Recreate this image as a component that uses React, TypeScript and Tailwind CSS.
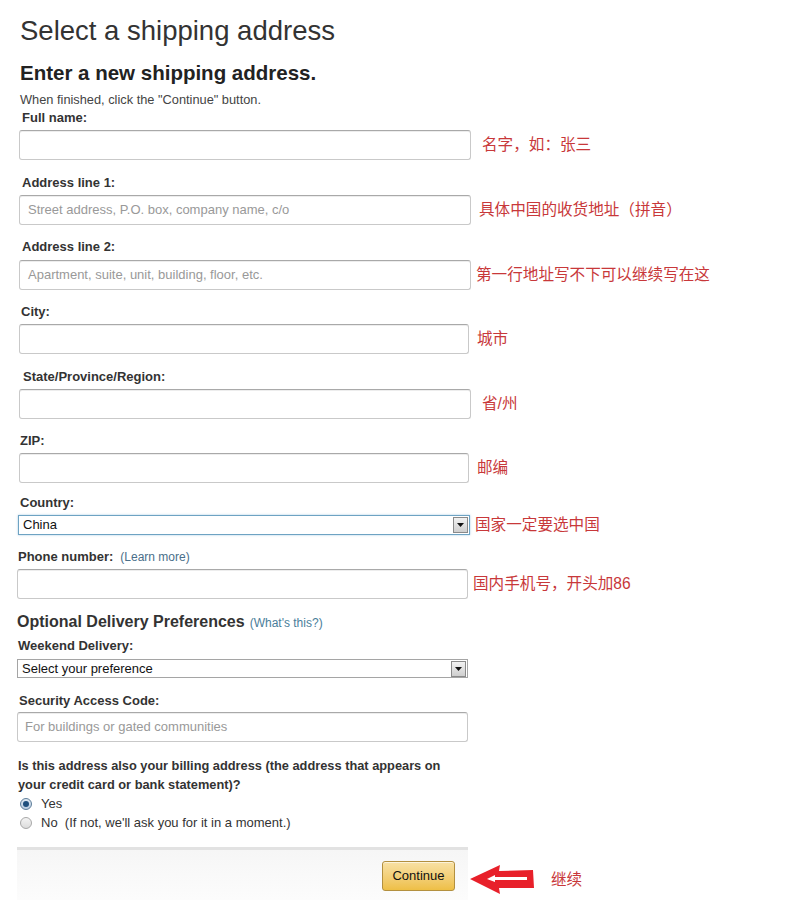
import * as React from "react"

const font = { fontFamily: '"Liberation Sans", Arial, "Noto Sans CJK SC", sans-serif' }

function Note({ text, className = "" }: { text: string; className?: string }) {
  return (
    <span
      className={`text-[15.6px] leading-none text-[#c8383a] whitespace-nowrap ${className}`}
      style={{ fontFamily: '"Liberation Sans", "Noto Sans CJK SC", sans-serif' }}
    >
      {text}
    </span>
  )
}

function TextField({
  label,
  placeholder,
  note,
  labelClass = "",
  boxClass = "ml-[19px] w-[452px]",
  noteClass = "ml-[11px]",
  gapClass = "mt-[4px]",
  children,
}: {
  label: string
  placeholder?: string
  note?: string
  labelClass?: string
  boxClass?: string
  noteClass?: string
  gapClass?: string
  children?: React.ReactNode
}) {
  return (
    <div>
      <div className={`h-[16px] text-[13px] leading-[16px] font-bold text-[#333] ${labelClass}`}>
        {label}
        {children}
      </div>
      <div className={`flex items-center ${gapClass}`}>
        <div
          className={`h-[30px] shrink-0 rounded-[3px] border border-[#c9c9c9] border-t-[#a9a9a9] bg-white shadow-[inset_0_1px_0_rgba(0,0,0,0.07)] flex items-center px-[8px] text-[13px] text-[#999] ${boxClass}`}
        >
          {placeholder}
        </div>
        {note && <Note text={note} className={noteClass} />}
      </div>
    </div>
  )
}

function DropArrow() {
  return (
    <div className="w-[15px] h-[16px] border border-[#8a8a8a] bg-gradient-to-b from-[#f2f2f2] to-[#cfcfcf] flex items-center justify-center mr-[1px]">
      <svg width="7" height="4" viewBox="0 0 7 4">
        <polygon points="0,0 7,0 3.5,4" fill="#111" />
      </svg>
    </div>
  )
}

function Radio({ checked }: { checked?: boolean }) {
  return (
    <span
      className={`inline-flex w-[12px] h-[12px] rounded-full border items-center justify-center ${
        checked ? "border-[#5d7d9a] bg-gradient-to-b from-[#dfe9f2] to-[#b9cbe0]" : "border-[#a8a8a8] bg-gradient-to-b from-[#f4f4f4] to-[#dcdcdc]"
      }`}
    >
      {checked && <span className="w-[6px] h-[6px] rounded-full bg-[#1f4f7d]" />}
    </span>
  )
}

export default function App() {
  return (
    <div className="w-[796px] h-[900px] bg-white overflow-hidden text-[#333]" style={font}>
      {/* Header */}
      <div className="pl-[20px] pt-[15px]">
        <h1 className="text-[27.5px] leading-[32px] font-normal text-[#333]">Select a shipping address</h1>
        <h2 className="mt-[14px] text-[20.5px] leading-[24px] font-bold text-[#222]">Enter a new shipping address.</h2>
        <p className="mt-[8px] text-[12.8px] leading-[14px] text-[#444]">When finished, click the "Continue" button.</p>
      </div>

      {/* Fields */}
      <div className="mt-[3px]">
        <TextField label="Full name:" labelClass="ml-[22px]" note="名字，如：张三" />
        <div className="mt-[15px]">
          <TextField
            label="Address line 1:"
            labelClass="ml-[22px]"
            placeholder="Street address, P.O. box, company name, c/o"
            note="具体中国的收货地址（拼音）"
            noteClass="ml-[8px]"
          />
        </div>
        <div className="mt-[14px]">
          <TextField
            label="Address line 2:"
            labelClass="ml-[22px]"
            placeholder="Apartment, suite, unit, building, floor, etc."
            note="第一行地址写不下可以继续写在这"
            noteClass="ml-[5px]"
            gapClass="mt-[5px]"
          />
        </div>
        <div className="mt-[14px]">
          <TextField
            label="City:"
            labelClass="ml-[21px]"
            boxClass="ml-[19px] w-[450px]"
            note="城市"
            noteClass="ml-[8px]"
          />
        </div>
        <div className="mt-[15px]">
          <TextField label="State/Province/Region:" labelClass="ml-[23px]" note="省/州" />
        </div>
        <div className="mt-[14px]">
          <TextField
            label="ZIP:"
            labelClass="ml-[20px]"
            boxClass="ml-[19px] w-[450px]"
            note="邮编"
            noteClass="ml-[8px]"
          />
        </div>

        {/* Country */}
        <div className="mt-[12px]">
          <div className="ml-[20px] h-[16px] text-[13px] leading-[16px] font-bold text-[#333]">Country:</div>
          <div className="mt-[4px] flex items-center">
            <div className="ml-[18px] w-[452px] h-[20px] border border-[#6ea3c3] bg-white shadow-[0_0_2px_rgba(80,150,200,0.5)] flex items-center justify-between">
              <span className="pl-[4px] text-[13px] text-[#111]">China</span>
              <DropArrow />
            </div>
            <Note text="国家一定要选中国" className="ml-[5px]" />
          </div>
        </div>

        {/* Phone */}
        <div className="mt-[14px]">
          <TextField
            label="Phone number:"
            labelClass="ml-[18px]"
            boxClass="ml-[17px] w-[451px]"
            note="国内手机号，开头加86"
            noteClass="ml-[5px]"
          >
            <span className="font-normal text-[12px] text-[#4a6f8a] ml-[7px]">(Learn more)</span>
          </TextField>
        </div>

        {/* Optional */}
        <div className="mt-[13px] ml-[17px]">
          <div className="h-[20px] leading-[20px]">
            <span className="text-[16px] font-bold text-[#333]">Optional Delivery Preferences</span>
            <span className="ml-[5px] text-[12px] text-[#4a7e9a]">(What's this?)</span>
          </div>
          <div className="mt-[6px] ml-[1px] h-[16px] text-[13px] leading-[16px] font-bold text-[#333]">Weekend Delivery:</div>
          <div className="mt-[5px] w-[451px] h-[19px] border border-[#a5a5a5] bg-white flex items-center justify-between">
            <span className="pl-[4px] text-[13px] text-[#111]">Select your preference</span>
            <DropArrow />
          </div>
          <div className="mt-[15px] ml-[2px] h-[16px] text-[13px] leading-[16px] font-bold text-[#333]">Security Access Code:</div>
          <div className="mt-[3px] w-[451px] h-[30px] rounded-[3px] border border-[#c9c9c9] border-t-[#a9a9a9] shadow-[inset_0_1px_0_rgba(0,0,0,0.07)] flex items-center px-[7px] text-[13px] text-[#999]">
            For buildings or gated communities
          </div>

          {/* Billing */}
          <div className="mt-[14px] ml-[1px] w-[440px] text-[12.8px] leading-[19px] font-bold text-[#333]">
            Is this address also your billing address (the address that appears on your credit card or bank statement)?
          </div>
          <div className="ml-[3px] text-[13px] leading-[19px] text-[#333]">
            <div className="flex items-center gap-[9px]">
              <Radio checked />
              <span>Yes</span>
            </div>
            <div className="flex items-center gap-[9px]">
              <Radio />
              <span>No&nbsp; (If not, we'll ask you for it in a moment.)</span>
            </div>
          </div>
        </div>

        {/* Footer */}
        <div className="mt-[15px] flex items-center">
          <div className="ml-[17px] w-[451px] h-[60px] border-t-[3px] border-[#e2e2e2] bg-gradient-to-b from-[#f6f6f6] to-[#fdfdfd] flex justify-end pt-[11px] pr-[13px]">
            <button className="w-[73px] h-[30px] rounded-[3px] border border-[#b3903f] bg-gradient-to-b from-[#f8e1a4] to-[#eebf45] text-[13px] text-[#111] shadow-[inset_0_1px_0_rgba(255,255,255,0.6)]">
              Continue
            </button>
          </div>
          <svg width="66" height="30" viewBox="0 0 66 30" className="ml-[1px] self-start translate-y-[18px]">
            <polygon points="1,14 31,0 30,6 64,5 65,23 30,23 31,29" fill="#e8202a" />
            <polyline points="18,14 26,10 26,12 58,12 58,15 26,15 26,17" fill="#fff" stroke="none" />
            <rect x="20" y="13" width="38" height="2" fill="#fff" />
          </svg>
          <Note text="继续" className="ml-[16px] self-start mt-[25px]" />
        </div>
      </div>
    </div>
  )
}
